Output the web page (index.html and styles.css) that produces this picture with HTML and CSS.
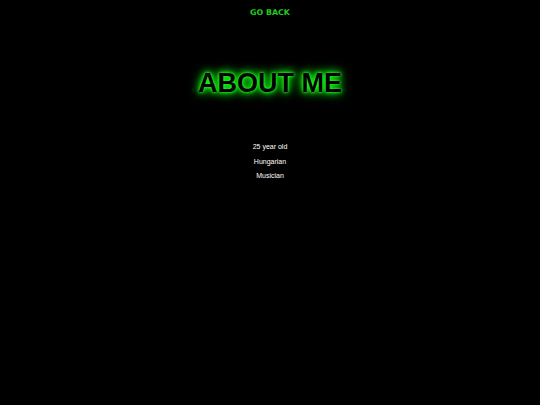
FILE: index.html
```html
<!DOCTYPE html>
<html>
<head>
<meta charset="utf-8">
<link rel="stylesheet" href="styles.css">
</head>
<body>
<nav class="nav"><a class="back" href="#">GO BACK</a></nav>
<h1 class="title">ABOUT ME</h1>
<div class="facts">
<p>25 year old</p>
<p>Hungarian</p>
<p>Musician</p>
</div>
</body>
</html>
```
FILE: styles.css
```css
html, body { margin: 0; padding: 0; background: #000; }
body { font-family: "Liberation Sans", Arial, sans-serif; color: #fff; text-align: center; }
.nav { padding-top: 8px; height: 10px; }
.back { font-family: "DejaVu Sans", Verdana, sans-serif; font-size: 7.9px; font-weight: bold; color: #22cc22; text-decoration: none; line-height: 10px; display: inline-block; vertical-align: top; }
.title { margin: 50px 0 0; font-size: 27px; font-weight: bold; line-height: 30px; color: #000; text-shadow: 0 0 2px #2f2, 0 0 4px #2f2, 0 0 8px #1f1, 0 0 12px #0d0; }
.facts { margin-top: 42px; font-size: 7px; }
.facts p { margin: 0; line-height: 14.5px; }
```
